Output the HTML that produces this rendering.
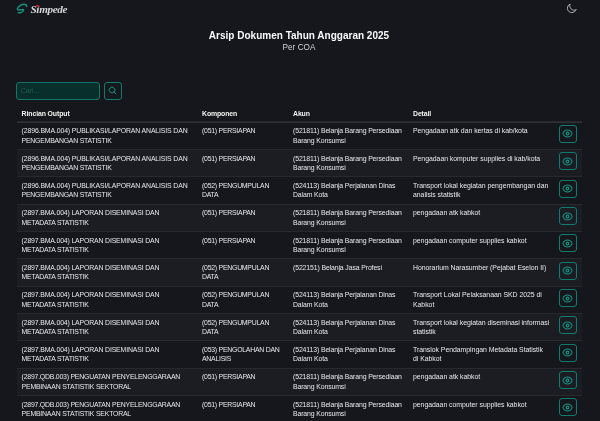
<!DOCTYPE html>
<html lang="id">
<head>
<meta charset="utf-8">
<title>Simpede</title>
<style>
*{box-sizing:border-box;margin:0;padding:0}
html,body{width:600px;height:421px;overflow:hidden;background:#16171c;color:#e4e4e7;font-family:"Liberation Sans",sans-serif;}
body{position:relative}
.wrap{position:absolute;left:0;top:0;width:600px;height:421px;overflow:hidden;will-change:transform}
.logo{position:absolute;left:0;top:0;width:30px;height:18px}
.logo svg{display:block}
.brand{position:absolute;left:30.5px;top:2.3px;font-family:"Liberation Serif",serif;font-style:italic;font-weight:bold;font-size:11.2px;color:#d4d4d8;letter-spacing:-0.35px;line-height:14px}
.dot{position:absolute;left:36.4px;top:4.9px;width:2.5px;height:2.5px;border-radius:50%;background:#e11d1d}
.moon{position:absolute;left:565.7px;top:3.2px}
.moon svg{display:block}
h1{position:absolute;left:-1px;width:600px;top:30.4px;text-align:center;font-size:10.03px;font-weight:bold;color:#fafafa;line-height:12px}
h2{position:absolute;left:-1px;width:600px;top:41.6px;text-align:center;font-size:8.2px;font-weight:normal;color:#d4d4d8;line-height:11px}
.search{position:absolute;left:16.4px;top:82px;width:83.2px;height:17.8px;border:1px solid #0f7567;border-radius:3px;background:#082f2b;color:#1b6057;font-size:7px;line-height:15.8px;padding-left:3.4px}
.sbtn{position:absolute;left:104px;top:82px;width:18px;height:17.6px;border:1px solid #107c6d;border-radius:3px;background:#15191d}
.sbtn svg{position:absolute;left:3.1px;top:3.2px;display:block}
table{position:absolute;left:17px;top:103px;width:564.5px;border-collapse:separate;border-spacing:0;font-size:6.9px;line-height:9.45px;table-layout:fixed}
th{text-align:left;font-weight:bold;color:#f4f4f5;padding:5.6px 4px 2.5px 4px;height:17.5px;letter-spacing:-0.1px;border-bottom:1px solid #26282e}
td{vertical-align:top;white-space:nowrap;padding:3.72px 4px 3.73px 4px;border-top:1px solid #27292f;height:27.35px;color:#e8e8ec}
td:nth-child(1){letter-spacing:-0.125px;padding-left:4.6px}
th:nth-child(1){padding-left:4.6px}
.a{letter-spacing:-0.215px}.b{letter-spacing:-0.15px}.c{letter-spacing:-0.235px}.d{letter-spacing:-0.195px}
td:nth-child(2){letter-spacing:-0.24px}
td:nth-child(3){letter-spacing:-0.12px}
td:nth-child(4){letter-spacing:-0.03px}
tbody tr:first-child td{border-top-color:#303239}
tbody tr:nth-child(even) td{background:#1b1d23}
.eye{display:block;width:17.8px;height:18px;margin-left:0.05px;border:1px solid #107c6d;border-radius:3px;position:relative;margin-top:-1.3px}
.eye svg{position:absolute;left:2.45px;top:2.5px;display:block}
</style>
</head>
<body>
<div class="wrap">
<div class="logo"><svg width="30" height="18" viewBox="0 0 30 18" fill="none" stroke="#13917d" stroke-width="1.45" stroke-linecap="round" stroke-linejoin="round"><path d="M26.7 6.5C26.9 5.2 25.7 4.2 23.9 4.2C21.5 4.2 19.3 5.8 18 7.6C17 9 17.2 9.9 18.6 10C20.5 10.1 22.5 9.2 23.5 9.6C24.1 10.2 23 11.5 21.4 12.3C20.3 12.8 19.2 12.9 18.3 12.8"/></svg></div>
<div class="brand">Simpede</div><div class="dot"></div>
<div class="moon"><svg width="11" height="11" viewBox="0 0 24 24" fill="none" stroke="#b8b8c0" stroke-width="2" stroke-linecap="round" stroke-linejoin="round"><path d="M21.752 15.002A9.718 9.718 0 0118 15.75c-5.385 0-9.75-4.365-9.75-9.75 0-1.33.266-2.597.748-3.752A9.753 9.753 0 003 11.25C3 16.635 7.365 21 12.75 21a9.753 9.753 0 009.002-5.998z"/></svg></div>
<h1>Arsip Dokumen Tahun Anggaran 2025</h1>
<h2>Per COA</h2>
<div class="search">Cari...</div>
<div class="sbtn"><svg width="9.2" height="9.2" viewBox="0 0 24 24" fill="none" stroke="#12917f" stroke-width="2.5" stroke-linecap="round"><path d="M21 21l-5.197-5.197m0 0A7.5 7.5 0 105.196 5.196a7.5 7.5 0 0010.607 10.607z"/></svg></div>
<table>
<colgroup><col style="width:181px"><col style="width:91px"><col style="width:120px"><col style="width:146px"><col style="width:26.5px"></colgroup>
<thead><tr><th>Rincian Output</th><th>Komponen</th><th>Akun</th><th>Detail</th><th></th></tr></thead>
<tbody>
<tr><td>(2896.BMA.004) PUBLIKASI/LAPORAN ANALISIS DAN<br><span class="a">PENGEMBANGAN STATISTIK</span></td><td>(051) PERSIAPAN</td><td>(521811) Belanja Barang Persediaan<br>Barang Konsumsi</td><td>Pengadaan atk dan kertas di kab/kota</td><td><span class="eye"><svg width="11" height="11" viewBox="0 0 24 24" fill="none" stroke="#12917f" stroke-width="2.2" stroke-linecap="round" stroke-linejoin="round"><path d="M2.036 12.322a1.012 1.012 0 010-.639C3.423 7.51 7.36 4.5 12 4.5c4.638 0 8.573 3.007 9.963 7.178.07.207.07.431 0 .639C20.577 16.49 16.64 19.5 12 19.5c-4.638 0-8.573-3.007-9.963-7.178z"/><circle cx="12" cy="12" r="3" stroke-width="2.6"/></svg></span></td></tr>
<tr><td>(2896.BMA.004) PUBLIKASI/LAPORAN ANALISIS DAN<br><span class="a">PENGEMBANGAN STATISTIK</span></td><td>(051) PERSIAPAN</td><td>(521811) Belanja Barang Persediaan<br>Barang Konsumsi</td><td>Pengadaan komputer supplies di kab/kota</td><td><span class="eye"><svg width="11" height="11" viewBox="0 0 24 24" fill="none" stroke="#12917f" stroke-width="2.2" stroke-linecap="round" stroke-linejoin="round"><path d="M2.036 12.322a1.012 1.012 0 010-.639C3.423 7.51 7.36 4.5 12 4.5c4.638 0 8.573 3.007 9.963 7.178.07.207.07.431 0 .639C20.577 16.49 16.64 19.5 12 19.5c-4.638 0-8.573-3.007-9.963-7.178z"/><circle cx="12" cy="12" r="3" stroke-width="2.6"/></svg></span></td></tr>
<tr><td>(2896.BMA.004) PUBLIKASI/LAPORAN ANALISIS DAN<br><span class="a">PENGEMBANGAN STATISTIK</span></td><td>(052) PENGUMPULAN<br>DATA</td><td>(524113) Belanja Perjalanan Dinas<br>Dalam Kota</td><td>Transport lokal kegiatan pengembangan dan<br>analisis statistik</td><td><span class="eye"><svg width="11" height="11" viewBox="0 0 24 24" fill="none" stroke="#12917f" stroke-width="2.2" stroke-linecap="round" stroke-linejoin="round"><path d="M2.036 12.322a1.012 1.012 0 010-.639C3.423 7.51 7.36 4.5 12 4.5c4.638 0 8.573 3.007 9.963 7.178.07.207.07.431 0 .639C20.577 16.49 16.64 19.5 12 19.5c-4.638 0-8.573-3.007-9.963-7.178z"/><circle cx="12" cy="12" r="3" stroke-width="2.6"/></svg></span></td></tr>
<tr><td><span class="b">(2897.BMA.004) LAPORAN DISEMINASI DAN</span><br><span class="c">METADATA STATISTIK</span></td><td>(051) PERSIAPAN</td><td>(521811) Belanja Barang Persediaan<br>Barang Konsumsi</td><td>pengadaan atk kabkot</td><td><span class="eye"><svg width="11" height="11" viewBox="0 0 24 24" fill="none" stroke="#12917f" stroke-width="2.2" stroke-linecap="round" stroke-linejoin="round"><path d="M2.036 12.322a1.012 1.012 0 010-.639C3.423 7.51 7.36 4.5 12 4.5c4.638 0 8.573 3.007 9.963 7.178.07.207.07.431 0 .639C20.577 16.49 16.64 19.5 12 19.5c-4.638 0-8.573-3.007-9.963-7.178z"/><circle cx="12" cy="12" r="3" stroke-width="2.6"/></svg></span></td></tr>
<tr><td><span class="b">(2897.BMA.004) LAPORAN DISEMINASI DAN</span><br><span class="c">METADATA STATISTIK</span></td><td>(051) PERSIAPAN</td><td>(521811) Belanja Barang Persediaan<br>Barang Konsumsi</td><td>pengadaan computer supplies kabkot</td><td><span class="eye"><svg width="11" height="11" viewBox="0 0 24 24" fill="none" stroke="#12917f" stroke-width="2.2" stroke-linecap="round" stroke-linejoin="round"><path d="M2.036 12.322a1.012 1.012 0 010-.639C3.423 7.51 7.36 4.5 12 4.5c4.638 0 8.573 3.007 9.963 7.178.07.207.07.431 0 .639C20.577 16.49 16.64 19.5 12 19.5c-4.638 0-8.573-3.007-9.963-7.178z"/><circle cx="12" cy="12" r="3" stroke-width="2.6"/></svg></span></td></tr>
<tr><td><span class="b">(2897.BMA.004) LAPORAN DISEMINASI DAN</span><br><span class="c">METADATA STATISTIK</span></td><td>(052) PENGUMPULAN<br>DATA</td><td>(522151) Belanja Jasa Profesi</td><td>Honorarium Narasumber (Pejabat Eselon II)</td><td><span class="eye"><svg width="11" height="11" viewBox="0 0 24 24" fill="none" stroke="#12917f" stroke-width="2.2" stroke-linecap="round" stroke-linejoin="round"><path d="M2.036 12.322a1.012 1.012 0 010-.639C3.423 7.51 7.36 4.5 12 4.5c4.638 0 8.573 3.007 9.963 7.178.07.207.07.431 0 .639C20.577 16.49 16.64 19.5 12 19.5c-4.638 0-8.573-3.007-9.963-7.178z"/><circle cx="12" cy="12" r="3" stroke-width="2.6"/></svg></span></td></tr>
<tr><td><span class="b">(2897.BMA.004) LAPORAN DISEMINASI DAN</span><br><span class="c">METADATA STATISTIK</span></td><td>(052) PENGUMPULAN<br>DATA</td><td>(524113) Belanja Perjalanan Dinas<br>Dalam Kota</td><td>Transport Lokal Pelaksanaan SKD 2025 di<br>Kabkot</td><td><span class="eye"><svg width="11" height="11" viewBox="0 0 24 24" fill="none" stroke="#12917f" stroke-width="2.2" stroke-linecap="round" stroke-linejoin="round"><path d="M2.036 12.322a1.012 1.012 0 010-.639C3.423 7.51 7.36 4.5 12 4.5c4.638 0 8.573 3.007 9.963 7.178.07.207.07.431 0 .639C20.577 16.49 16.64 19.5 12 19.5c-4.638 0-8.573-3.007-9.963-7.178z"/><circle cx="12" cy="12" r="3" stroke-width="2.6"/></svg></span></td></tr>
<tr><td><span class="b">(2897.BMA.004) LAPORAN DISEMINASI DAN</span><br><span class="c">METADATA STATISTIK</span></td><td>(052) PENGUMPULAN<br>DATA</td><td>(524113) Belanja Perjalanan Dinas<br>Dalam Kota</td><td>Transport lokal kegiatan diseminasi informasi<br>statistik</td><td><span class="eye"><svg width="11" height="11" viewBox="0 0 24 24" fill="none" stroke="#12917f" stroke-width="2.2" stroke-linecap="round" stroke-linejoin="round"><path d="M2.036 12.322a1.012 1.012 0 010-.639C3.423 7.51 7.36 4.5 12 4.5c4.638 0 8.573 3.007 9.963 7.178.07.207.07.431 0 .639C20.577 16.49 16.64 19.5 12 19.5c-4.638 0-8.573-3.007-9.963-7.178z"/><circle cx="12" cy="12" r="3" stroke-width="2.6"/></svg></span></td></tr>
<tr><td><span class="b">(2897.BMA.004) LAPORAN DISEMINASI DAN</span><br><span class="c">METADATA STATISTIK</span></td><td>(053) PENGOLAHAN DAN<br>ANALISIS</td><td>(524113) Belanja Perjalanan Dinas<br>Dalam Kota</td><td>Translok Pendampingan Metadata Statistik<br>di Kabkot</td><td><span class="eye"><svg width="11" height="11" viewBox="0 0 24 24" fill="none" stroke="#12917f" stroke-width="2.2" stroke-linecap="round" stroke-linejoin="round"><path d="M2.036 12.322a1.012 1.012 0 010-.639C3.423 7.51 7.36 4.5 12 4.5c4.638 0 8.573 3.007 9.963 7.178.07.207.07.431 0 .639C20.577 16.49 16.64 19.5 12 19.5c-4.638 0-8.573-3.007-9.963-7.178z"/><circle cx="12" cy="12" r="3" stroke-width="2.6"/></svg></span></td></tr>
<tr><td><span class="a">(2897.QDB.003) PENGUATAN PENYELENGGARAAN</span><br><span class="d">PEMBINAAN STATISTIK SEKTORAL</span></td><td>(051) PERSIAPAN</td><td>(521811) Belanja Barang Persediaan<br>Barang Konsumsi</td><td>pengadaan atk kabkot</td><td><span class="eye"><svg width="11" height="11" viewBox="0 0 24 24" fill="none" stroke="#12917f" stroke-width="2.2" stroke-linecap="round" stroke-linejoin="round"><path d="M2.036 12.322a1.012 1.012 0 010-.639C3.423 7.51 7.36 4.5 12 4.5c4.638 0 8.573 3.007 9.963 7.178.07.207.07.431 0 .639C20.577 16.49 16.64 19.5 12 19.5c-4.638 0-8.573-3.007-9.963-7.178z"/><circle cx="12" cy="12" r="3" stroke-width="2.6"/></svg></span></td></tr>
<tr><td><span class="a">(2897.QDB.003) PENGUATAN PENYELENGGARAAN</span><br><span class="d">PEMBINAAN STATISTIK SEKTORAL</span></td><td>(051) PERSIAPAN</td><td>(521811) Belanja Barang Persediaan<br>Barang Konsumsi</td><td>pengadaan computer supplies kabkot</td><td><span class="eye"><svg width="11" height="11" viewBox="0 0 24 24" fill="none" stroke="#12917f" stroke-width="2.2" stroke-linecap="round" stroke-linejoin="round"><path d="M2.036 12.322a1.012 1.012 0 010-.639C3.423 7.51 7.36 4.5 12 4.5c4.638 0 8.573 3.007 9.963 7.178.07.207.07.431 0 .639C20.577 16.49 16.64 19.5 12 19.5c-4.638 0-8.573-3.007-9.963-7.178z"/><circle cx="12" cy="12" r="3" stroke-width="2.6"/></svg></span></td></tr>
</tbody>
</table>
</div>
</body>
</html>
